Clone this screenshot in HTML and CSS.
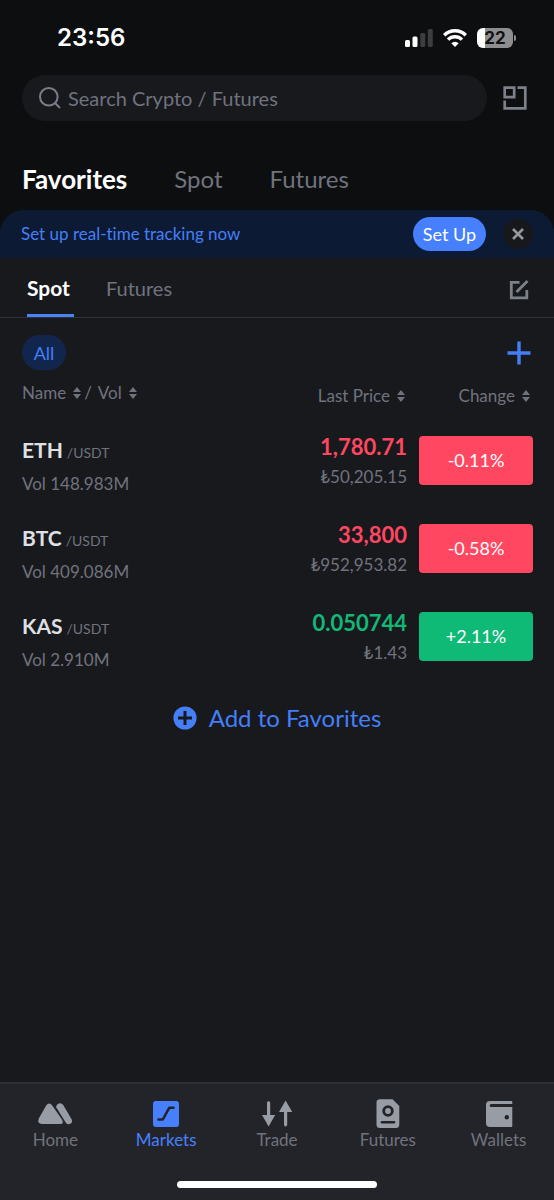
FILE: index.html
```html
<!DOCTYPE html>
<html lang="en">
<head>
<meta charset="utf-8">
<meta name="viewport" content="width=device-width, initial-scale=1">
<title>Markets</title>
<link rel="stylesheet" href="styles.css">
</head>
<body class="app">
<svg class="defs" aria-hidden="true">
  <symbol id="sort" viewBox="0 0 8 12"><path d="M4 0 8 5H0zM4 12 0 7h8z" fill="currentColor"/></symbol>
</svg>
<header class="top">
  <div class="status">
    <span class="clock">23:56</span>
    <div class="status-icons">
      <svg width="28" height="18" viewBox="0 0 28 18" aria-label="Signal"><g fill="#fff"><rect y="11" width="5" height="7" rx="1.5"/><rect x="7.500" y="7.500" width="5" height="10.500" rx="1.500"/></g><g fill="#3c3d3f"><rect x="15.300" y="4" width="5" height="14" rx="1.500"/><rect x="22.800" width="5" height="18" rx="1.500"/></g></svg>
      <svg width="24" height="18" viewBox="0 0 24 18" aria-label="Wi-Fi"><g fill="none" stroke="#fff" stroke-width="3.400"><path d="M1.200 6.200a15.300 15.300 0 0 1 21.600 0"/><path d="M5 10.600a10 10 0 0 1 14 0"/></g><path d="M12 18l-3.700-3.700a5.300 5.300 0 0 1 7.400 0z" fill="#fff"/></svg>
      <div class="battery"><span class="battery-level">22</span></div>
    </div>
  </div>
  <div class="search-row">
    <label class="search">
      <svg width="22" height="22" viewBox="0 0 22 22" fill="none" stroke="currentColor" stroke-width="2" aria-hidden="true"><circle cx="9.800" cy="9.800" r="8.800"/><path d="m16 16 5 5"/></svg>
      <input class="search-input" type="search" placeholder="Search Crypto / Futures" aria-label="Search Crypto / Futures">
    </label>
    <button class="icon-button layout-button" aria-label="Layout"><svg width="24" height="24" viewBox="0 0 24 24" fill="none" stroke="currentColor" stroke-width="2.700"><path d="M1.700 1.700h9.500v9.500H1.700zM14.500 1.700h7.800v20.600H1.700v-7.800"/></svg></button>
  </div>
  <nav class="tabs" aria-label="Market">
    <button class="tab tab-active">Favorites</button>
    <button class="tab">Spot</button>
    <button class="tab">Futures</button>
  </nav>
</header>
<main class="content">
  <section class="banner">
    <span class="banner-text">Set up real-time tracking now</span>
    <button class="setup">Set Up</button>
    <button class="close" aria-label="Close"><svg width="12" height="12" viewBox="0 0 12 12" fill="none" stroke="currentColor" stroke-width="2.600"><path d="m1 1 10 10M11 1 1 11"/></svg></button>
  </section>
  <nav class="subtabs" aria-label="Favorites">
    <button class="subtab subtab-active">Spot</button>
    <button class="subtab">Futures</button>
    <button class="icon-button edit" aria-label="Edit"><svg width="20" height="20" viewBox="0 0 20 20" fill="none" stroke="currentColor" stroke-width="2.800"><path d="M10.500 2.300H2.300v15.500h15.500V10"/><path d="M7.500 12 18.500 1"/></svg></button>
  </nav>
  <div class="groups">
    <button class="pill">All</button>
    <button class="icon-button add-group" aria-label="Add group"><svg width="24" height="24" viewBox="0 0 24 24" stroke="currentColor" stroke-width="3.400"><path d="M12 .5v23M.5 12h23"/></svg></button>
  </div>
  <table class="pairs">
    <thead>
      <tr>
        <th class="col-name"><button class="sort">Name <svg class="arrows"><use href="#sort"/></svg></button><span class="slash">/</span><button class="sort">Vol <svg class="arrows"><use href="#sort"/></svg></button></th>
        <th class="col-price"><button class="sort">Last Price <svg class="arrows"><use href="#sort"/></svg></button></th>
        <th class="col-change"><button class="sort">Change <svg class="arrows"><use href="#sort"/></svg></button></th>
      </tr>
    </thead>
    <tbody>
      <tr>
        <td class="pair"><div><b class="coin">ETH</b><span class="quote">/USDT</span></div><div class="volume">Vol 148.983M</div></td>
        <td class="price"><div class="last down">1,780.71</div><div class="fiat">₺50,205.15</div></td>
        <td class="change"><button class="badge badge-down">-0.11%</button></td>
      </tr>
      <tr>
        <td class="pair"><div><b class="coin">BTC</b><span class="quote">/USDT</span></div><div class="volume">Vol 409.086M</div></td>
        <td class="price"><div class="last down">33,800</div><div class="fiat">₺952,953.82</div></td>
        <td class="change"><button class="badge badge-down">-0.58%</button></td>
      </tr>
      <tr>
        <td class="pair"><div><b class="coin">KAS</b><span class="quote">/USDT</span></div><div class="volume">Vol 2.910M</div></td>
        <td class="price"><div class="last up">0.050744</div><div class="fiat">₺1.43</div></td>
        <td class="change"><button class="badge badge-up">+2.11%</button></td>
      </tr>
    </tbody>
  </table>
  <button class="add-favorites"><svg width="24" height="24" viewBox="0 0 24 24" aria-hidden="true"><circle cx="12" cy="12" r="11.600" fill="currentColor"/><path d="M12 5v14M5 12h14" stroke="#18191d" stroke-width="3"/></svg>Add to Favorites</button>
</main>
<footer class="bottom">
  <nav class="bottom-nav" aria-label="Main">
    <a class="nav-item" href="#"><svg class="nav-icon" viewBox="0 0 34 30"><path d="M8 5.700q3.200-4.400 6.400 0L24 19.500q2.200 4.500-1.500 4.500H4Q-1.200 23.500.8 18.500z" fill="currentColor"/><path d="M18.200 7.200q-.2-2.500 2-3.500 3.200-1.200 5 1.300l8.300 14q1.500 3.500-1.200 4.800-2.600 1.200-4.300-.8z" fill="currentColor"/></svg>Home</a>
    <a class="nav-item nav-active" href="#" aria-current="page"><svg class="nav-icon" viewBox="0 0 34 30"><rect x="4" y="1" width="26" height="26" rx="3" fill="currentColor"/><path d="M9.500 19.500h4.300l6.400-11.700h4.300" fill="none" stroke="#232429" stroke-width="2.600" stroke-linecap="round" stroke-linejoin="round"/></svg>Markets</a>
    <a class="nav-item" href="#"><svg class="nav-icon" viewBox="0 0 34 30" fill="currentColor"><path d="M7 2.500q1.600-3 3.200 0V15h5L8.600 26.500 2 15h5zM24 25V12h-5L25.600.5 32.200 12h-5v13q-1.600 3-3.200 0z"/></svg>Trade</a>
    <a class="nav-item" href="#"><svg class="nav-icon" viewBox="0 0 34 30"><path d="M9-.8h12.500L28.300 6v18.500a3.500 3.500 0 0 1-3.500 3.500H9a3.500 3.500 0 0 1-3.500-3.500v-22A3.500 3.500 0 0 1 9-.8z" fill="currentColor"/><circle cx="17" cy="11" r="4.300" fill="none" stroke="#232429" stroke-width="2.800"/><path d="m17 8.600 2.400 2.400-2.400 2.400-2.400-2.400z" fill="currentColor"/><path d="M11 22.300h12" stroke="#232429" stroke-width="2.600" stroke-linecap="round"/></svg>Futures</a>
    <a class="nav-item" href="#"><svg class="nav-icon" viewBox="0 0 34 30"><path d="M29.300 1q1 0 1 1v24a1 1 0 0 1-1 1H8a4 4 0 0 1-4-4V5a4 4 0 0 1 4-4z" fill="currentColor"/><path d="M31 5.500H9.300" stroke="#232429" stroke-width="3.200" stroke-linecap="round"/><circle cx="24.800" cy="17.200" r="2.200" fill="#232429"/></svg>Wallets</a>
  </nav>
  <div class="home-indicator"></div>
</footer>
</body>
</html>
```

FILE: styles.css
```css
* { box-sizing: border-box; }

.app {
  margin: 0;
  min-height: 100vh;
  display: flex;
  flex-direction: column;
  background: #0d0e10;
  color: #70737d;
  font-family: Lato, "Open Sans", sans-serif;
  font-size: 17px;
  line-height: 24px;
  font-variant-ligatures: none;
}

button, input { font: inherit; color: inherit; }
button { border: 0; padding: 0; background: none; cursor: pointer; }
svg { display: block; flex: none; overflow: visible; }
.defs { position: absolute; width: 0; height: 0; }
.icon-button { display: flex; color: #7b8089; }

.status {
  height: 75px;
  padding: 0 41px 0 57px;
  display: flex;
  align-items: center;
  justify-content: space-between;
}
.clock { color: #fff; font: 600 24px/32px Inter, sans-serif; }
.status-icons { display: flex; align-items: center; gap: 10px; }
.battery {
  position: relative;
  width: 36px;
  height: 20px;
  border-radius: 6px;
  background: linear-gradient(90deg, #fff 22%, #8e8e90 22%);
}
.battery::after {
  content: "";
  position: absolute;
  left: 37px;
  top: 7px;
  width: 2px;
  height: 6px;
  border-radius: 0 2px 2px 0;
  background: #8e8e90;
}
.battery-level {
  display: block;
  text-align: center;
  color: #111214;
  font: 700 17px/20px Inter, sans-serif;
}

.search-row { display: flex; align-items: center; padding: 0 27px 0 22px; gap: 16px; }
.search {
  flex: 1;
  height: 46px;
  display: flex;
  align-items: center;
  gap: 7px;
  padding: 0 17px;
  border-radius: 23px;
  background: #18191d;
  color: #7b7e88;
}
.search-input {
  flex: 1;
  min-width: 0;
  padding: 0;
  border: 0;
  outline: 0;
  background: none;
  font-size: 20px;
}
.search-input::placeholder { color: #70737d; opacity: 1; }

.tabs { display: flex; align-items: center; gap: 47px; height: 89px; padding: 26px 22px 0; }
.tab { font-size: 24px; line-height: 32px; }
.tab-active { color: #fff; font-weight: 700; font-size: 26px; }

.content { flex: 1; display: flex; flex-direction: column; background: #18191d; border-radius: 24px 24px 0 0; }
.banner {
  display: flex;
  align-items: center;
  height: 48px;
  padding: 0 21px;
  border-radius: 24px 24px 0 0;
  background: #0d1a33;
  color: #447ff7;
}
.banner-text { flex: 1; }
.setup { height: 34px; width: 73px; border-radius: 17px; background: #4680ff; color: #fff; font-size: 18px; }
.close {
  display: flex;
  align-items: center;
  justify-content: center;
  width: 30px;
  height: 30px;
  margin-left: 17px;
  border-radius: 50%;
  background: #17181b;
  color: #94979d;
}

.subtabs { display: flex; height: 60px; padding: 0 25px 0 27px; gap: 32px; border-bottom: 1px solid #303136; }
.subtab { font-size: 20px; padding-top: 4px; border-bottom: 3px solid transparent; }
.subtab-active { color: #fff; font-weight: 700; font-size: 21px; padding-right: 4px; border-color: #4a82f8; }
.edit { margin-left: auto; align-items: center; padding-top: 4px; }

.groups { display: flex; align-items: center; justify-content: space-between; padding: 17px 23px 0 22px; }
.pill { width: 44px; height: 35px; border-radius: 18px; background: #12264d; color: #447ff7; font-size: 18px; }
.add-group { color: #447ff7; }

.pairs { width: 100%; border-collapse: collapse; table-layout: fixed; }
.pairs th, .pairs td { padding: 0; text-align: left; font-weight: 400; }
.pairs th { height: 46px; vertical-align: top; }
.pairs th.col-name { padding: 11px 0 0 22px; }
.pairs th.col-price, .pairs th.col-change { text-align: right; padding-top: 14px; }
.pairs th.col-change { width: 147px; padding-right: 24px; }
.pairs th.col-price { width: 160px; padding-right: 2px; }
.pairs td { height: 88px; }
.sort { display: inline-flex; align-items: center; gap: 7px; font-size: 17px; line-height: 24px; }
.slash { margin: 0 6px 0 3px; }
.arrows { width: 8px; height: 12px; }
.pairs td.pair { padding: 15px 0 0 22px; }
.coin { color: #dfe0e3; font-size: 21px; line-height: 32px; font-weight: 700; }
.quote { margin-left: 4px; font-size: 14px; }
.volume { line-height: 36px; }
.pairs td.price { text-align: right; padding-top: 2px; }
.last { font-size: 22px; line-height: 32px; font-weight: 700; }
.fiat { line-height: 28px; }
.down { color: #ff4761; }
.up { color: #12b877; }
.pairs td.change { padding: 0 21px 0 12px; }
.badge { display: block; width: 100%; height: 49px; border-radius: 4px; color: #fff; font-size: 18px; }
.badge-down { background: #ff4761; }
.badge-up { background: #0fba77; }

.add-favorites {
  align-self: center;
  display: flex;
  align-items: center;
  gap: 12px;
  margin-top: 22px;
  color: #447ff7;
  font-size: 24px;
  line-height: 32px;
}

.bottom { background: #232429; border-top: 2px solid #303136; padding-bottom: 12px; }
.bottom-nav { display: grid; grid-template-columns: repeat(5, 1fr); padding-top: 16px; }
.nav-item {
  display: flex;
  flex-direction: column;
  align-items: center;
  color: #70737d;
  text-decoration: none;
}
.nav-icon { width: 34px; height: 30px; color: #989ca5; margin-bottom: -2px; }
.nav-active, .nav-active .nav-icon { color: #4680ff; }
.home-indicator { width: 36%; height: 7px; margin: 29px auto 0; border-radius: 4px; background: #fff; }
```
